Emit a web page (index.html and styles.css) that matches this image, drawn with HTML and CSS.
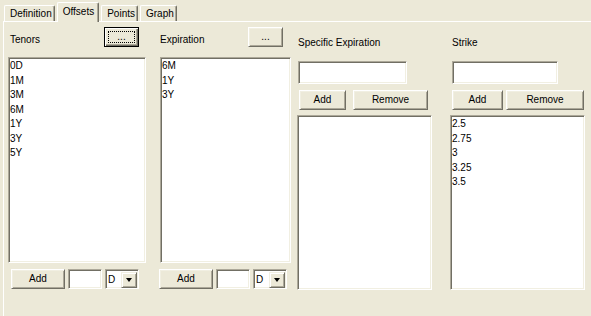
FILE: index.html
```html
<!DOCTYPE html>
<html lang="en">
<head>
    <meta charset="UTF-8">
    <title>Offsets</title>
    <link rel="stylesheet" href="styles.css">
</head>
<body>
    <div class="tabs">
        <span class="tab tab-first">Definition</span>
        <span class="tab active">Offsets</span>
        <span class="tab">Points</span>
        <span class="tab">Graph</span>
    </div>

    <div class="panel">
        <div class="col col-tenors">
            <div class="col-head">
                <span class="label">Tenors</span>
                <button class="btn btn-dots btn-default"><span class="focus">...</span></button>
            </div>
            <div class="sunken list list-tall">
                <div>0D</div>
                <div>1M</div>
                <div>3M</div>
                <div>6M</div>
                <div>1Y</div>
                <div>3Y</div>
                <div>5Y</div>
            </div>
            <div class="col-foot">
                <button class="btn btn-add">Add</button>
                <span class="sunken field-small"></span>
                <span class="sunken combo">
                    <span class="combo-value">D</span>
                    <span class="combo-btn"><span class="arrow"></span></span>
                </span>
            </div>
        </div>

        <div class="col col-expiration">
            <div class="col-head">
                <span class="label label-flush">Expiration</span>
                <button class="btn btn-dots">...</button>
            </div>
            <div class="sunken list list-tall">
                <div>6M</div>
                <div>1Y</div>
                <div>3Y</div>
            </div>
            <div class="col-foot col-foot-shift">
                <button class="btn btn-add">Add</button>
                <span class="sunken field-small"></span>
                <span class="sunken combo">
                    <span class="combo-value">D</span>
                    <span class="combo-btn"><span class="arrow"></span></span>
                </span>
            </div>
        </div>

        <div class="col col-specific">
            <span class="label">Specific Expiration</span>
            <span class="sunken field-wide"></span>
            <div class="btn-row">
                <button class="btn btn-add-sm">Add</button>
                <button class="btn btn-remove">Remove</button>
            </div>
            <div class="sunken list list-short"></div>
        </div>

        <div class="col col-strike">
            <span class="label">Strike</span>
            <span class="sunken field-wide"></span>
            <div class="btn-row">
                <button class="btn btn-add-sm">Add</button>
                <button class="btn btn-remove">Remove</button>
            </div>
            <div class="sunken list list-short">
                <div>2.5</div>
                <div>2.75</div>
                <div>3</div>
                <div>3.25</div>
                <div>3.5</div>
            </div>
        </div>
    </div>
</body>
</html>
```

FILE: styles.css
```css
:root {
    --face: #ece9d8;
    --light: #f1efe2;
    --shadow: #aca899;
    --dark: #716f64;
}

* {
    margin: 0;
    padding: 0;
    box-sizing: border-box;
}

body {
    width: 591px;
    height: 316px;
    overflow: hidden;
    background-color: var(--face);
    color: #000;
    font-family: "Liberation Sans", Arial, sans-serif;
    font-size: 10px;
}

/* tab strip */
.tabs {
    display: flex;
    align-items: flex-end;
    height: 21px;
    padding-left: 4px;
}

.tab {
    height: 16px;
    line-height: 15px;
    padding: 0 2px 0 5px;
    margin-right: 2px;
    border-top: 1px solid #fff;
    border-left: 1px solid #fff;
    border-right: 1px solid var(--dark);
    border-radius: 2px 2px 0 0;
    box-shadow: inset -1px 0 var(--shadow);
}

.tab.active {
    position: relative;
    z-index: 1;
    height: 20px;
    margin-bottom: -1px;
    line-height: 17px;
    padding: 0 4px 0 5px;
    background-color: var(--face);
}

/* panel */
.panel {
    display: flex;
    height: 295px;
    margin-left: 3px;
    padding: 5px 0 0 4px;
    border-top: 1px solid #fff;
    border-left: 1px solid #fff;
}

.col {
    display: flex;
    flex-direction: column;
}

.col-tenors {
    width: 138px;
}

.col-expiration {
    width: 131px;
    margin-left: 14px;
}

.col-specific {
    width: 135px;
    margin-left: 6px;
}

.col-strike {
    width: 135px;
    margin-left: 18px;
}

.col-head {
    display: flex;
    justify-content: space-between;
    height: 30px;
}

.label {
    line-height: 12px;
    margin-top: 7px;
    padding-left: 2px;
}

.label-flush {
    padding-left: 0;
}

.col-specific .label,
.col-strike .label {
    margin-top: 10px;
    padding-left: 1px;
}

.col-strike .label {
    padding-left: 2px;
}

/* controls */
.sunken {
    display: block;
    background-color: #fff;
    border: 1px solid;
    border-color: var(--shadow) #fff #fff var(--shadow);
    box-shadow: inset 1px 1px var(--dark), inset -1px -1px var(--light);
}

.btn {
    display: flex;
    align-items: center;
    justify-content: center;
    height: 20px;
    background-color: var(--face);
    border: 1px solid;
    border-color: #fff var(--dark) var(--dark) #fff;
    box-shadow: inset 1px 1px var(--light), inset -1px -1px var(--shadow);
    font: inherit;
    line-height: 12px;
    color: #000;
}

.btn-dots {
    width: 35px;
    margin-right: 8px;
}

.btn-default {
    margin-right: 7px;
    border-color: #000;
    box-shadow: inset 1px 1px #fff, inset -1px -1px var(--dark), inset -2px -2px var(--shadow);
    padding: 3px;
}

.focus {
    display: flex;
    align-items: center;
    justify-content: center;
    width: 100%;
    height: 100%;
    line-height: 8px;
    border: 1px dotted #000;
}

.list {
    line-height: 14.5px;
    padding: 1px 0 0 1px;
    overflow: hidden;
}

.list-tall {
    height: 206px;
}

.list-short {
    height: 175px;
    margin-top: 5px;
}

.col-foot {
    display: flex;
    margin-top: 6px;
    padding-left: 3px;
}

.col-foot-shift {
    padding-left: 0;
    margin-left: -1px;
}

.btn-add {
    width: 54px;
}

.field-small {
    width: 34px;
    height: 20px;
    margin-left: 3px;
}

.combo {
    display: flex;
    justify-content: space-between;
    width: 34px;
    height: 20px;
    margin-left: 3px;
    padding: 2px 1px 2px 2px;
}

.combo-value {
    line-height: 16px;
}

.combo-btn {
    display: flex;
    align-items: center;
    justify-content: center;
    width: 16px;
    height: 16px;
    background-color: var(--face);
    border: 1px solid;
    border-color: var(--light) var(--dark) var(--dark) var(--light);
    box-shadow: inset 1px 1px #fff, inset -1px -1px var(--shadow);
}

.arrow {
    width: 0;
    height: 0;
    border-top: 4px solid #000;
    border-left: 3.5px solid transparent;
    border-right: 3.5px solid transparent;
}

.field-wide {
    height: 23px;
    margin-top: 12px;
}

.col-specific .field-wide {
    width: 109px;
    margin-left: 1px;
}

.col-strike .field-wide {
    width: 106px;
    margin-left: 2px;
}

.btn-row {
    display: flex;
    margin-top: 6px;
}

.col-specific .btn-row {
    padding-left: 2px;
}

.col-specific .btn-add-sm {
    width: 47px;
}

.col-specific .btn-remove {
    width: 75px;
    margin-left: 7px;
}

.col-strike .btn-row {
    padding-left: 2px;
}

.col-strike .btn-add-sm {
    width: 51px;
}

.col-strike .btn-remove {
    width: 78px;
    margin-left: 3px;
}
```
